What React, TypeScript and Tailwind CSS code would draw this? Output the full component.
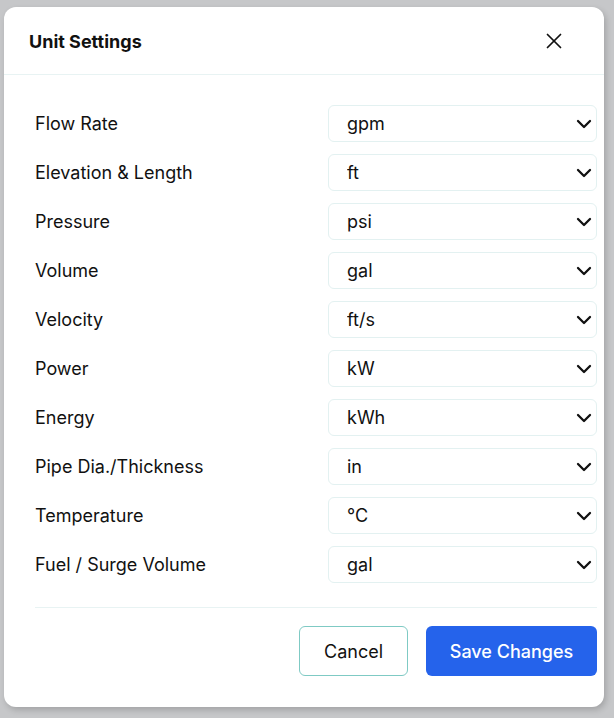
import React, { useState } from 'react';
import { ChevronDown, X } from 'lucide-react';

type UnitRow = {
  key: string;
  label: string;
  value: string;
  options: string[];
};

const UNIT_ROWS: UnitRow[] = [
  { key: 'flow', label: 'Flow Rate', value: 'gpm', options: ['gpm', 'L/s', 'm³/h'] },
  { key: 'length', label: 'Elevation & Length', value: 'ft', options: ['ft', 'm'] },
  { key: 'pressure', label: 'Pressure', value: 'psi', options: ['psi', 'kPa', 'bar'] },
  { key: 'volume', label: 'Volume', value: 'gal', options: ['gal', 'L', 'm³'] },
  { key: 'velocity', label: 'Velocity', value: 'ft/s', options: ['ft/s', 'm/s'] },
  { key: 'power', label: 'Power', value: 'kW', options: ['kW', 'hp'] },
  { key: 'energy', label: 'Energy', value: 'kWh', options: ['kWh', 'MJ'] },
  { key: 'pipe', label: 'Pipe Dia./Thickness', value: 'in', options: ['in', 'mm'] },
  { key: 'temperature', label: 'Temperature', value: '°C', options: ['°C', '°F'] },
  { key: 'surge', label: 'Fuel / Surge Volume', value: 'gal', options: ['gal', 'L', 'm³'] },
];

function UnitSelect({ row, value, onChange }: { row: UnitRow; value: string; onChange: (value: string) => void }): React.ReactElement {
  return (
    <div className="relative w-[269px]">
      <select
        value={value}
        onChange={(event) => onChange(event.target.value)}
        className="h-[37px] w-full appearance-none rounded-md border border-[#e3f1f1] bg-white pl-[18px] pr-10 text-[18px] text-[#111] outline-none"
      >
        {row.options.map((option) => (
          <option key={option} value={option}>
            {option}
          </option>
        ))}
      </select>
      <ChevronDown className="pointer-events-none absolute right-[1px] top-1/2 h-6 w-6 -translate-y-1/2 text-[#111]" strokeWidth={2.3} aria-hidden="true" />
    </div>
  );
}

export default function App(): React.ReactElement {
  const [values, setValues] = useState<Record<string, string>>(() =>
    Object.fromEntries(UNIT_ROWS.map((row) => [row.key, row.value])),
  );

  return (
    <div className="h-[718px] w-[614px] overflow-hidden bg-[#c6c7c9] pl-[4px] pt-[7px]" style={{ fontFamily: 'Inter, "Noto Sans", sans-serif' }}>
      <div className="w-[600px] rounded-xl bg-white shadow-[2px_3px_6px_rgba(0,0,0,0.18)]">
        <div className="flex h-[68px] items-center justify-between border-b border-[#e8f3f3] pl-[25px] pr-[37px]">
          <h2 className="pt-[1px] text-[18px] font-bold text-[#111]">Unit Settings</h2>
          <button type="button" className="text-[#111]" aria-label="Close">
            <X className="h-[26px] w-[26px]" strokeWidth={1.6} aria-hidden="true" />
          </button>
        </div>

        <div className="pb-[31px] pl-[31px] pr-[7px] pt-[30px]">
          <div className="flex flex-col gap-[12px]">
            {UNIT_ROWS.map((row) => (
              <div key={row.key} className="flex items-center justify-between">
                <label className="text-[18px] text-[#111]">{row.label}</label>
                <UnitSelect
                  row={row}
                  value={values[row.key]}
                  onChange={(value) => setValues((prev) => ({ ...prev, [row.key]: value }))}
                />
              </div>
            ))}
          </div>

          <div className="mt-[24px] border-t border-[#e8f3f3] pt-[18px]">
            <div className="flex justify-end gap-[18px]">
              <button type="button" className="h-[50px] w-[109px] rounded-md border border-[#7fcac4] bg-white text-[18px] text-[#111]">
                Cancel
              </button>
              <button type="button" className="h-[50px] w-[171px] rounded-md bg-[#2563eb] text-[18px] font-medium text-white">
                Save Changes
              </button>
            </div>
          </div>
        </div>
      </div>
    </div>
  );
}
